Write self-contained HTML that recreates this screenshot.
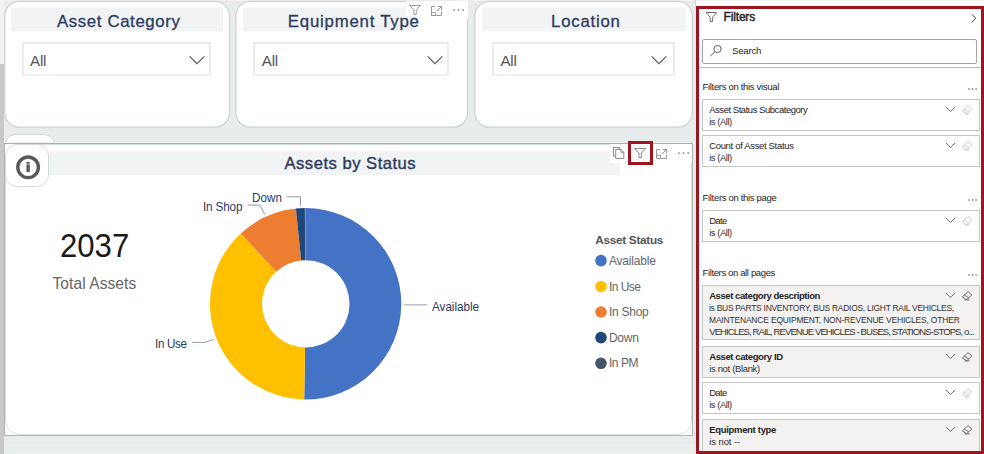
<!DOCTYPE html>
<html><head><meta charset="utf-8"><title>Assets by Status</title>
<style>
html,body{margin:0;padding:0}
body{width:984px;height:454px;position:relative;overflow:hidden;background:#e9eced;font-family:"Liberation Sans",sans-serif}
.t{position:absolute;white-space:nowrap;line-height:1}
</style></head><body>
<div style="position:absolute;left:0.00px;top:0.00px;width:4.00px;height:64.00px;background:#f3f2f1"></div>
<div style="position:absolute;left:0.00px;top:64.00px;width:4.00px;height:390.00px;background:#c8c8c8"></div>
<div style="position:absolute;left:0.00px;top:0.00px;width:984.00px;height:1.00px;background:#f3f2f1"></div>
<svg style="position:absolute;left:0;top:0" width="700" height="135"><rect x="4.80" y="1.4" width="224.70" height="125.8" rx="14.5" fill="#fff" stroke="#cad3d4" stroke-width="1.2"/></svg>
<div style="position:absolute;left:11.30px;top:7.00px;width:211.70px;height:1.00px;background:#f9f9fa"></div>
<div style="position:absolute;left:11.30px;top:8.00px;width:211.70px;height:23.00px;background:#f2f3f5"></div>
<div style="position:absolute;left:11.30px;top:31.00px;width:211.70px;height:1.00px;background:#fbfbfc"></div>
<span class="t " style="left:57.00px;top:14px;font-size:16.80px;letter-spacing:0.627px;-webkit-text-stroke:0.30px #2c3b5e;color:#2c3b5e;">Asset Category</span>
<div style="position:absolute;left:22.00px;top:42.00px;width:188.90px;height:34.00px;border:2px solid #ececec;border-bottom-color:#f0f0f0;box-sizing:border-box;background:#fff"></div>
<span class="t " style="left:30.00px;top:53px;font-size:15.20px;letter-spacing:-0.246px;color:#555;">All</span>
<svg style="position:absolute;left:188.60px;top:55px" width="17" height="10" viewBox="0 0 17 10"><path d="M0.6 1.3 L8 8.7 L15.4 1.3" fill="none" stroke="#555" stroke-width="1.1"/></svg>
<svg style="position:absolute;left:0;top:0" width="700" height="135"><rect x="235.90" y="1.4" width="231.70" height="125.8" rx="14.5" fill="#fff" stroke="#cad3d4" stroke-width="1.2"/></svg>
<div style="position:absolute;left:242.50px;top:7.00px;width:173.50px;height:1.00px;background:#f9f9fa"></div>
<div style="position:absolute;left:242.50px;top:8.00px;width:173.50px;height:23.00px;background:#f2f3f5"></div>
<div style="position:absolute;left:242.50px;top:31.00px;width:173.50px;height:1.00px;background:#fbfbfc"></div>
<span class="t " style="left:287.80px;top:14px;font-size:16.80px;letter-spacing:0.784px;-webkit-text-stroke:0.30px #2c3b5e;color:#2c3b5e;">Equipment Type</span>
<div style="position:absolute;left:253.40px;top:42.00px;width:195.40px;height:34.00px;border:2px solid #ececec;border-bottom-color:#f0f0f0;box-sizing:border-box;background:#fff"></div>
<span class="t " style="left:261.80px;top:53px;font-size:15.20px;letter-spacing:-0.246px;color:#555;">All</span>
<svg style="position:absolute;left:427.10px;top:55px" width="17" height="10" viewBox="0 0 17 10"><path d="M0.6 1.3 L8 8.7 L15.4 1.3" fill="none" stroke="#555" stroke-width="1.1"/></svg>
<svg style="position:absolute;left:0;top:0" width="700" height="135"><rect x="474.90" y="1.4" width="217.40" height="125.8" rx="14.5" fill="#fff" stroke="#cad3d4" stroke-width="1.2"/></svg>
<div style="position:absolute;left:481.80px;top:7.00px;width:204.00px;height:1.00px;background:#f9f9fa"></div>
<div style="position:absolute;left:481.80px;top:8.00px;width:204.00px;height:23.00px;background:#f2f3f5"></div>
<div style="position:absolute;left:481.80px;top:31.00px;width:204.00px;height:1.00px;background:#fbfbfc"></div>
<span class="t " style="left:551.10px;top:14px;font-size:16.80px;letter-spacing:0.769px;-webkit-text-stroke:0.30px #2c3b5e;color:#2c3b5e;">Location</span>
<div style="position:absolute;left:492.00px;top:42.00px;width:182.60px;height:34.00px;border:2px solid #ececec;border-bottom-color:#f0f0f0;box-sizing:border-box;background:#fff"></div>
<span class="t " style="left:500.40px;top:53px;font-size:15.20px;letter-spacing:-0.246px;color:#555;">All</span>
<svg style="position:absolute;left:651.40px;top:55px" width="17" height="10" viewBox="0 0 17 10"><path d="M0.6 1.3 L8 8.7 L15.4 1.3" fill="none" stroke="#555" stroke-width="1.1"/></svg>
<div style="position:absolute;left:406.00px;top:1.00px;width:62.00px;height:15.00px;background:#fff"></div>
<div style="position:absolute;left:462.00px;top:1.00px;width:6.00px;height:18.00px;background:#fff"></div>
<svg style="position:absolute;left:409.20px;top:5.00px" width="12.10" height="10.00" viewBox="0 0 12 10"><path d="M0.6 0.5 H11.4 L7.2 5.1 V9.5 H4.8 V5.1 Z" fill="none" stroke="#9a9a9a" stroke-width="1.00" stroke-linejoin="miter"/></svg>
<svg style="position:absolute;left:431.10px;top:5.80px" width="11" height="10" viewBox="0 0 11 10"><path d="M4.3 0.5 H0.5 V9.5 H10.5 V5.8 M0.5 6.6 H4.6 V9.5 M6.6 0.5 H10.5 V4.4 M10.5 0.5 L6 5" fill="none" stroke="#9a9a9a" stroke-width="1"/></svg>
<svg style="position:absolute;left:452.90px;top:7.90px" width="14" height="4" viewBox="0 0 14 4"><circle cx="1" cy="2" r="0.85" fill="#6e6e6e"/><circle cx="5.60" cy="2" r="0.85" fill="#6e6e6e"/><circle cx="10.20" cy="2" r="0.85" fill="#6e6e6e"/></svg>
<div style="position:absolute;left:4.50px;top:134.00px;width:50.00px;height:30.00px;background:#fff;border:1px solid #d3dada;border-radius:11px;box-sizing:border-box"></div>
<div style="position:absolute;left:4.00px;top:142.00px;width:689.00px;height:1.00px;background:#eff1f1"></div>
<div style="position:absolute;left:4.00px;top:143.00px;width:689.00px;height:293.00px;background:#fff;border:1px solid #b3b3b3;border-top-color:#adadad;box-sizing:border-box"></div>
<div style="position:absolute;left:5.00px;top:144.00px;width:687.00px;height:291.00px;border:1px solid #d6dddd;border-radius:14px;box-sizing:border-box"></div>
<div style="position:absolute;left:49.00px;top:151.20px;width:571.00px;height:23.40px;background:#f2f3f5"></div>
<div style="position:absolute;left:610.00px;top:144.00px;width:82.00px;height:18.60px;background:#fff"></div>
<div style="position:absolute;left:4.50px;top:143.50px;width:44.50px;height:43.00px;background:#fff;border:1px solid #d3dada;border-radius:12px;box-sizing:border-box"></div>
<svg style="position:absolute;left:14px;top:153px" width="28" height="28" viewBox="0 0 28 28"><circle cx="14.1" cy="14.3" r="10.3" fill="none" stroke="#595959" stroke-width="3.4"/><rect x="12.4" y="8.9" width="3.4" height="1.8" fill="#595959"/><rect x="12.4" y="11.4" width="3.4" height="7.7" fill="#595959"/></svg>
<span class="t " style="left:284.50px;top:156px;font-size:16.60px;letter-spacing:0.504px;-webkit-text-stroke:0.40px #2c3b5e;color:#2c3b5e;">Assets by Status</span>
<svg style="position:absolute;left:613px;top:147px" width="12" height="12" viewBox="0 0 12 12"><path d="M2.7 9.2 H0.5 V0.5 H6.5 V2.2 M2.7 2.5 H8 L10.8 5.3 V11.5 H2.7 Z M8 2.5 V5.3 H10.8" fill="none" stroke="#8a8a8a" stroke-width="1"/></svg>
<div style="position:absolute;left:628.00px;top:141.00px;width:25.00px;height:24.00px;border:3px solid #9f151f;box-sizing:border-box;background:#fff"></div>
<svg style="position:absolute;left:634.00px;top:148.00px" width="12.40" height="10.00" viewBox="0 0 12 10"><path d="M0.6 0.5 H11.4 L7.2 5.1 V9.5 H4.8 V5.1 Z" fill="none" stroke="#8a8a8a" stroke-width="1.00" stroke-linejoin="miter"/></svg>
<svg style="position:absolute;left:656.40px;top:149.00px" width="11" height="10" viewBox="0 0 11 10"><path d="M4.3 0.5 H0.5 V9.5 H10.5 V5.8 M0.5 6.6 H4.6 V9.5 M6.6 0.5 H10.5 V4.4 M10.5 0.5 L6 5" fill="none" stroke="#9a9a9a" stroke-width="1"/></svg>
<svg style="position:absolute;left:677.70px;top:151.00px" width="14" height="4" viewBox="0 0 14 4"><circle cx="1" cy="2" r="0.85" fill="#6e6e6e"/><circle cx="5.60" cy="2" r="0.85" fill="#6e6e6e"/><circle cx="10.20" cy="2" r="0.85" fill="#6e6e6e"/></svg>
<span class="t " style="left:60.00px;top:229px;font-size:33.30px;letter-spacing:0.003px;color:#1a1a1a;transform:scaleX(0.9340);transform-origin:0 0;">2037</span>
<span class="t " style="left:52.50px;top:276px;font-size:15.60px;letter-spacing:0.051px;color:#666;">Total Assets</span>
<svg style="position:absolute;left:0;top:0" width="692" height="454" viewBox="0 0 692 454"><path d="M305.70 208.10 A95.70 95.70 0 1 1 304.20 399.49 L305.02 347.39 A43.60 43.60 0 1 0 305.70 260.20 Z" fill="#4472c4"/><path d="M304.20 399.49 A95.70 95.70 0 0 1 240.80 233.47 L276.13 271.76 A43.60 43.60 0 0 0 305.02 347.39 Z" fill="#ffc000"/><path d="M240.80 233.47 A95.70 95.70 0 0 1 295.86 208.61 L301.22 260.43 A43.60 43.60 0 0 0 276.13 271.76 Z" fill="#ed7d31"/><path d="M295.86 208.61 A95.70 95.70 0 0 1 304.86 208.10 L305.32 260.20 A43.60 43.60 0 0 0 301.22 260.43 Z" fill="#1f477b"/><path d="M304.86 208.10 A95.70 95.70 0 0 1 305.70 208.10 L305.70 260.20 A43.60 43.60 0 0 0 305.32 260.20 Z" fill="#64758d"/><polyline points="404.1,304.9 427.1,304.9" fill="none" stroke="#8e9bb5" stroke-width="1"/><polyline points="286.7,196.8 300.5,196.8 300.5,205.9" fill="none" stroke="#8e9bb5" stroke-width="1"/><polyline points="247.3,205.1 259.8,205.1 264.8,214.4" fill="none" stroke="#8e9bb5" stroke-width="1"/><polyline points="192.0,342.4 205.1,342.4 213.9,339.3" fill="none" stroke="#8e9bb5" stroke-width="1"/><circle cx="601" cy="260.6" r="5.8" fill="#4472c4"/><circle cx="601" cy="286.5" r="5.8" fill="#ffc000"/><circle cx="601" cy="312.0" r="5.8" fill="#ed7d31"/><circle cx="601" cy="337.6" r="5.8" fill="#1f477b"/><circle cx="601" cy="363.3" r="5.8" fill="#44546a"/></svg>
<span class="t " style="left:432.10px;top:301px;font-size:12.20px;letter-spacing:-0.028px;color:#2c3b5e;transform:scaleX(0.9600);transform-origin:0 0;">Available</span>
<span class="t " style="left:251.50px;top:192px;font-size:12.20px;letter-spacing:0.020px;color:#2c3b5e;transform:scaleX(0.9600);transform-origin:0 0;">Down</span>
<span class="t " style="left:203.00px;top:201px;font-size:12.20px;letter-spacing:-0.152px;color:#2c3b5e;transform:scaleX(0.9600);transform-origin:0 0;">In Shop</span>
<span class="t " style="left:155.00px;top:338px;font-size:12.20px;letter-spacing:-0.385px;color:#2c3b5e;transform:scaleX(0.9600);transform-origin:0 0;">In Use</span>
<span class="t " style="left:595.30px;top:235px;font-size:11.80px;letter-spacing:-0.307px;color:#555;font-weight:bold;">Asset Status</span>
<span class="t " style="left:608.90px;top:255px;font-size:12.00px;letter-spacing:-0.173px;color:#666;">Available</span>
<span class="t " style="left:608.90px;top:281px;font-size:12.00px;letter-spacing:-0.516px;color:#666;">In Use</span>
<span class="t " style="left:608.90px;top:306px;font-size:12.00px;letter-spacing:-0.245px;color:#666;">In Shop</span>
<span class="t " style="left:608.90px;top:332px;font-size:12.00px;letter-spacing:-0.193px;color:#666;">Down</span>
<span class="t " style="left:608.90px;top:357px;font-size:12.00px;letter-spacing:-0.435px;color:#666;">In PM</span>
<div style="position:absolute;left:9.00px;top:445.00px;width:682.00px;height:6.00px;border:1px solid #f0f2f2;background:#eaeded"></div>
<div style="position:absolute;left:696.00px;top:0.00px;width:288.00px;height:454.00px;background:#fff"></div>
<div style="position:absolute;left:696.00px;top:0.00px;width:288.00px;height:1.00px;background:#f3f2f1"></div>
<div style="position:absolute;left:695.00px;top:0.00px;width:1.00px;height:6.00px;background:#d4d4d4"></div>
<div style="position:absolute;left:696.00px;top:6.00px;width:288.00px;height:448.00px;border:3px solid #9f151f;box-sizing:border-box"></div>
<svg style="position:absolute;left:704.50px;top:12.00px" width="12.80" height="10.00" viewBox="0 0 12 10"><path d="M0.6 0.5 H11.4 L7.2 5.1 V9.5 H4.8 V5.1 Z" fill="none" stroke="#666" stroke-width="0.95" stroke-linejoin="miter"/></svg>
<span class="t " style="left:723.60px;top:11px;font-size:12.00px;letter-spacing:-0.178px;-webkit-text-stroke:0.45px #252423;color:#252423;">Filters</span>
<svg style="position:absolute;left:969px;top:12px" width="9" height="12" viewBox="0 0 9 12"><path d="M2.5 2.1 L6.8 6.2 L2.5 10.3" fill="none" stroke="#444" stroke-width="1"/></svg>
<div style="position:absolute;left:702.00px;top:39.00px;width:275.00px;height:25.00px;border:1px solid #a6a4a2;box-sizing:border-box;background:#fff;border-radius:2px"></div>
<svg style="position:absolute;left:709px;top:43px" width="14" height="14" viewBox="0 0 14 14"><circle cx="8.5" cy="6" r="3.6" fill="none" stroke="#605e5c" stroke-width="1"/><path d="M5.9 8.7 L1.4 13" stroke="#605e5c" stroke-width="1" fill="none"/></svg>
<span class="t " style="left:732.10px;top:46px;font-size:9.60px;letter-spacing:-0.243px;color:#252423;">Search</span>
<div style="position:absolute;left:699.00px;top:67.00px;width:282.00px;height:1.00px;background:#b9b7b5"></div>
<span class="t " style="left:702.50px;top:82px;font-size:9.50px;letter-spacing:-0.315px;color:#252423;">Filters on this visual</span>
<svg style="position:absolute;left:967.80px;top:86.50px" width="14" height="4" viewBox="0 0 14 4"><circle cx="1" cy="2" r="0.72" fill="#484644"/><circle cx="4.55" cy="2" r="0.72" fill="#484644"/><circle cx="8.10" cy="2" r="0.72" fill="#484644"/></svg>
<span class="t " style="left:702.50px;top:193px;font-size:9.50px;letter-spacing:-0.314px;color:#252423;">Filters on this page</span>
<svg style="position:absolute;left:967.80px;top:197.50px" width="14" height="4" viewBox="0 0 14 4"><circle cx="1" cy="2" r="0.72" fill="#484644"/><circle cx="4.55" cy="2" r="0.72" fill="#484644"/><circle cx="8.10" cy="2" r="0.72" fill="#484644"/></svg>
<span class="t " style="left:702.50px;top:268px;font-size:9.50px;letter-spacing:-0.365px;color:#252423;">Filters on all pages</span>
<svg style="position:absolute;left:967.80px;top:272.50px" width="14" height="4" viewBox="0 0 14 4"><circle cx="1" cy="2" r="0.72" fill="#484644"/><circle cx="4.55" cy="2" r="0.72" fill="#484644"/><circle cx="8.10" cy="2" r="0.72" fill="#484644"/></svg>
<div style="position:absolute;left:702.00px;top:99.00px;width:278.00px;height:32.00px;border:1px solid #c8c6c4;box-sizing:border-box;background:#fff"></div>
<span class="t " style="left:709.20px;top:105px;font-size:9.50px;letter-spacing:-0.466px;color:#252423;">Asset Status Subcategory</span>
<span class="t " style="left:709.20px;top:117px;font-size:9.50px;letter-spacing:-0.484px;color:#323130;">is (All)</span>
<svg style="position:absolute;left:945px;top:106.20px" width="11" height="7" viewBox="0 0 11 7"><path d="M0.9 0.9 L5.5 5.5 L10.1 0.9" fill="none" stroke="#605e5c" stroke-width="0.9"/></svg>
<svg style="position:absolute;left:961px;top:104.60px" width="12" height="10" viewBox="0 0 12 10"><path d="M7 0.7 L10.8 3.9 L5.8 8.7 L1.3 5.9 Z M3.3 4 L7.7 6.9 M3.6 8.9 H8.6" fill="none" stroke="#c8c6c4" stroke-width="0.9"/></svg>
<div style="position:absolute;left:702.00px;top:135.00px;width:278.00px;height:32.00px;border:1px solid #c8c6c4;box-sizing:border-box;background:#fff"></div>
<span class="t " style="left:709.20px;top:141px;font-size:9.50px;letter-spacing:-0.333px;color:#252423;">Count of Asset Status</span>
<span class="t " style="left:709.20px;top:153px;font-size:9.50px;letter-spacing:-0.484px;color:#323130;">is (All)</span>
<svg style="position:absolute;left:945px;top:142.20px" width="11" height="7" viewBox="0 0 11 7"><path d="M0.9 0.9 L5.5 5.5 L10.1 0.9" fill="none" stroke="#605e5c" stroke-width="0.9"/></svg>
<svg style="position:absolute;left:961px;top:140.60px" width="12" height="10" viewBox="0 0 12 10"><path d="M7 0.7 L10.8 3.9 L5.8 8.7 L1.3 5.9 Z M3.3 4 L7.7 6.9 M3.6 8.9 H8.6" fill="none" stroke="#c8c6c4" stroke-width="0.9"/></svg>
<div style="position:absolute;left:702.00px;top:210.00px;width:278.00px;height:32.00px;border:1px solid #c8c6c4;box-sizing:border-box;background:#fff"></div>
<span class="t " style="left:709.20px;top:216px;font-size:9.50px;letter-spacing:-0.689px;color:#252423;">Date</span>
<span class="t " style="left:709.20px;top:228px;font-size:9.50px;letter-spacing:-0.484px;color:#323130;">is (All)</span>
<svg style="position:absolute;left:945px;top:217.20px" width="11" height="7" viewBox="0 0 11 7"><path d="M0.9 0.9 L5.5 5.5 L10.1 0.9" fill="none" stroke="#605e5c" stroke-width="0.9"/></svg>
<svg style="position:absolute;left:961px;top:215.60px" width="12" height="10" viewBox="0 0 12 10"><path d="M7 0.7 L10.8 3.9 L5.8 8.7 L1.3 5.9 Z M3.3 4 L7.7 6.9 M3.6 8.9 H8.6" fill="none" stroke="#c8c6c4" stroke-width="0.9"/></svg>
<div style="position:absolute;left:702.00px;top:285.00px;width:278.00px;height:55.00px;border:1px solid #c8c6c4;box-sizing:border-box;background:#f3f2f1"></div>
<span class="t " style="left:709.20px;top:291px;font-size:9.50px;letter-spacing:-0.430px;color:#252423;font-weight:bold;">Asset category description</span>
<span class="t " style="left:709.20px;top:304px;font-size:9.10px;letter-spacing:-0.283px;color:#323130;transform:scaleX(0.9300);transform-origin:0 0;">is BUS PARTS INVENTORY, BUS RADIOS, LIGHT RAIL VEHICLES,</span>
<span class="t " style="left:709.20px;top:316px;font-size:9.10px;letter-spacing:-0.178px;color:#323130;transform:scaleX(0.9300);transform-origin:0 0;">MAINTENANCE EQUIPMENT, NON-REVENUE VEHICLES, OTHER</span>
<span class="t " style="left:709.20px;top:327px;font-size:9.50px;letter-spacing:-0.894px;color:#323130;">VEHICLES, RAIL, REVENUE VEHICLES - BUSES, STATIONS-STOPS, o...</span>
<svg style="position:absolute;left:945px;top:292.20px" width="11" height="7" viewBox="0 0 11 7"><path d="M0.9 0.9 L5.5 5.5 L10.1 0.9" fill="none" stroke="#605e5c" stroke-width="0.9"/></svg>
<svg style="position:absolute;left:961px;top:290.60px" width="12" height="10" viewBox="0 0 12 10"><path d="M7 0.7 L10.8 3.9 L5.8 8.7 L1.3 5.9 Z M3.3 4 L7.7 6.9 M3.6 8.9 H8.6" fill="none" stroke="#605e5c" stroke-width="0.9"/></svg>
<div style="position:absolute;left:702.00px;top:346.00px;width:278.00px;height:32.00px;border:1px solid #c8c6c4;box-sizing:border-box;background:#f3f2f1"></div>
<span class="t " style="left:709.20px;top:352px;font-size:9.50px;letter-spacing:-0.403px;color:#252423;font-weight:bold;">Asset category ID</span>
<span class="t " style="left:709.20px;top:364px;font-size:9.50px;letter-spacing:-0.341px;color:#323130;">is not (Blank)</span>
<svg style="position:absolute;left:945px;top:353.20px" width="11" height="7" viewBox="0 0 11 7"><path d="M0.9 0.9 L5.5 5.5 L10.1 0.9" fill="none" stroke="#605e5c" stroke-width="0.9"/></svg>
<svg style="position:absolute;left:961px;top:351.60px" width="12" height="10" viewBox="0 0 12 10"><path d="M7 0.7 L10.8 3.9 L5.8 8.7 L1.3 5.9 Z M3.3 4 L7.7 6.9 M3.6 8.9 H8.6" fill="none" stroke="#605e5c" stroke-width="0.9"/></svg>
<div style="position:absolute;left:702.00px;top:382.00px;width:278.00px;height:32.00px;border:1px solid #c8c6c4;box-sizing:border-box;background:#fff"></div>
<span class="t " style="left:709.20px;top:388px;font-size:9.50px;letter-spacing:-0.689px;color:#252423;">Date</span>
<span class="t " style="left:709.20px;top:400px;font-size:9.50px;letter-spacing:-0.484px;color:#323130;">is (All)</span>
<svg style="position:absolute;left:945px;top:389.20px" width="11" height="7" viewBox="0 0 11 7"><path d="M0.9 0.9 L5.5 5.5 L10.1 0.9" fill="none" stroke="#605e5c" stroke-width="0.9"/></svg>
<svg style="position:absolute;left:961px;top:387.60px" width="12" height="10" viewBox="0 0 12 10"><path d="M7 0.7 L10.8 3.9 L5.8 8.7 L1.3 5.9 Z M3.3 4 L7.7 6.9 M3.6 8.9 H8.6" fill="none" stroke="#c8c6c4" stroke-width="0.9"/></svg>
<div style="position:absolute;left:702.00px;top:419.00px;width:278.00px;height:36.00px;border:1px solid #c8c6c4;box-sizing:border-box;background:#f3f2f1"></div>
<span class="t " style="left:709.20px;top:425px;font-size:9.50px;letter-spacing:-0.312px;color:#252423;font-weight:bold;">Equipment type</span>
<span class="t " style="left:709.20px;top:437px;font-size:9.50px;letter-spacing:-0.084px;color:#323130;">is not --</span>
<svg style="position:absolute;left:945px;top:426.20px" width="11" height="7" viewBox="0 0 11 7"><path d="M0.9 0.9 L5.5 5.5 L10.1 0.9" fill="none" stroke="#605e5c" stroke-width="0.9"/></svg>
<svg style="position:absolute;left:961px;top:424.60px" width="12" height="10" viewBox="0 0 12 10"><path d="M7 0.7 L10.8 3.9 L5.8 8.7 L1.3 5.9 Z M3.3 4 L7.7 6.9 M3.6 8.9 H8.6" fill="none" stroke="#605e5c" stroke-width="0.9"/></svg>
<div style="position:absolute;left:696.00px;top:451.00px;width:288.00px;height:3.00px;background:#9f151f"></div>
<div style="position:absolute;left:981.00px;top:6.00px;width:3.00px;height:448.00px;background:#9f151f"></div>
</body></html>
